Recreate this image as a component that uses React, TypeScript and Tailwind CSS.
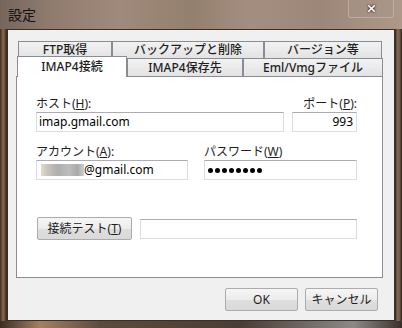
import { X } from "lucide-react";

const ui = { fontFamily: '"Noto Sans", "Noto Sans CJK JP", sans-serif' };

function Field({ w, children, right }: { w: string; children?: React.ReactNode; right?: boolean }) {
  return (
    <div
      className={`${w} h-[20px] flex items-center border border-[#dadde3] border-t-[#abadb3] bg-white px-[2px] text-[12px] text-black ${
        right ? "justify-end pr-[3px]" : ""
      }`}
    >
      {children}
    </div>
  );
}

function Btn({ w, children }: { w: string; children: React.ReactNode }) {
  return (
    <div
      className={`${w} h-[23px] flex items-center justify-center rounded-[2px] border border-[#acacac] bg-[linear-gradient(180deg,#f6f6f6_0%,#ececec_50%,#dfdfdf_51%,#d9d9d9_100%)] text-[12px] text-[#1e1e1e]`}
    >
      {children}
    </div>
  );
}

export default function App() {
  const backTabs = [
    { label: "FTP取得", w: "w-[94px]" },
    { label: "バックアップと削除", w: "w-[152px]" },
    { label: "バージョン等", w: "w-[118px]" },
  ];

  return (
    <div className="w-[402px] h-[328px] flex flex-col overflow-hidden bg-[#6e5a4b]" style={ui}>
      {/* title bar */}
      <div className="h-[29px] shrink-0 flex items-start justify-between bg-[linear-gradient(90deg,#75655b_0%,#8f7b6e_12%,#a08a7b_30%,#94806f_48%,#a48e80_62%,#9c8778_80%,#ad988a_100%)]">
        <div
          className="pl-[8px] pt-[5px] text-[14px] leading-[18px] text-[#111]"
          style={{ fontFamily: '"Noto Sans CJK JP", sans-serif' }}
        >
          設定
        </div>
        <div className="mr-[8px] w-[46px] h-[18px] flex items-center justify-center rounded-b-[3px] border border-t-0 border-[#c9b9ad]/70 bg-[#a8948a]/40">
          <X size={11} strokeWidth={3.5} className="text-white drop-shadow-[0_0_1px_#000]" />
        </div>
      </div>

      <div className="flex flex-1">
        <div className="w-[7px] bg-[linear-gradient(90deg,#3a2d24_0%,#8b6c50_45%,#5a4536_75%,#2e241d_100%)]" />

        {/* client area */}
        <div className="w-[388px] h-[292px] border border-[#3b2f27] bg-[#f0f0f0] flex flex-col pl-[8px] pt-[11px] text-[#1e1e1e]">
          {/* tabs */}
          <div className="flex pl-[2px] h-[17px]">
            {backTabs.map((t) => (
              <div
                key={t.label}
                className={`${t.w} h-[17px] flex items-center justify-center border border-b-0 border-[#898c95] bg-[linear-gradient(180deg,#f2f2f2,#e3e3e3)] text-[12px] font-medium`}
              >
                {t.label}
              </div>
            ))}
          </div>
          <div className="flex items-end pl-[1px] h-[18px]">
            <div className="relative z-10 w-[110px] h-[21px] -mb-px flex items-start justify-center pt-[1px] border border-b-0 border-[#898c95] bg-white text-[12px] font-medium">
              IMAP4接続
            </div>
            <div className="w-[116px] h-[18px] flex items-center justify-center border border-b-0 border-[#898c95] bg-[linear-gradient(180deg,#f2f2f2,#e3e3e3)] text-[12px] font-medium">
              IMAP4保存先
            </div>
            <div className="w-[140px] h-[18px] flex items-center justify-center border border-b-0 border-[#898c95] bg-[linear-gradient(180deg,#f2f2f2,#e3e3e3)] text-[12px] font-medium">
              Eml/Vmgファイル
            </div>
          </div>

          {/* panel */}
          <div className="w-[367px] h-[202px] border border-[#898c95] bg-white pl-[19px] pt-[19px] text-[12px]">
            <div className="flex gap-[8px] leading-[16px]">
              <div className="w-[248px]">
                ホスト(<u>H</u>):
              </div>
              <div className="w-[65px] text-right">
                ポート(<u>P</u>):
              </div>
            </div>
            <div className="flex gap-[8px]">
              <Field w="w-[248px]">imap.gmail.com</Field>
              <Field w="w-[65px]" right>
                993
              </Field>
            </div>

            <div className="mt-[12px] flex gap-[16px] leading-[16px]">
              <div className="w-[152px]">
                アカウント(<u>A</u>):
              </div>
              <div className="w-[153px]">
                パスワード(<u>W</u>)
              </div>
            </div>
            <div className="flex gap-[16px]">
              <Field w="w-[152px]">
                <span className="ml-[2px] inline-block w-[43px] h-[12px] bg-[linear-gradient(90deg,#e6d9cc_0%,#c8c3bf_15%,#aeaeae_40%,#bdbdbd_65%,#a9a9a9_85%,#cfcfcf_100%)] blur-[0.6px]" />
                <span>@gmail.com</span>
              </Field>
              <Field w="w-[153px]">
                <div className="flex gap-[2px] pl-[1px]">
                  {Array.from({ length: 8 }).map((_, i) => (
                    <span key={i} className="w-[5px] h-[5px] rounded-full bg-black" />
                  ))}
                </div>
              </Field>
            </div>

            <div className="mt-[37px] flex items-center gap-[8px] pl-[1px]">
              <Btn w="w-[95px]">
                接続テスト(<u>T</u>)
              </Btn>
              <Field w="w-[217px]" />
            </div>
          </div>

          {/* dialog buttons */}
          <div className="mt-[10px] flex justify-end gap-[7px] pr-[16px]">
            <Btn w="w-[73px]">OK</Btn>
            <Btn w="w-[73px]">キャンセル</Btn>
          </div>
        </div>

        <div className="w-[7px] bg-[linear-gradient(90deg,#2f2620_0%,#8a7058_40%,#6a5442_70%,#2a211b_100%)]" />
      </div>

      <div className="h-[7px] shrink-0 bg-[linear-gradient(90deg,#3a2d24_0%,#a48060_10%,#5c4a3c_25%,#4a3d33_60%,#8a8a88_88%,#3a302a_100%)]" />
    </div>
  );
}
